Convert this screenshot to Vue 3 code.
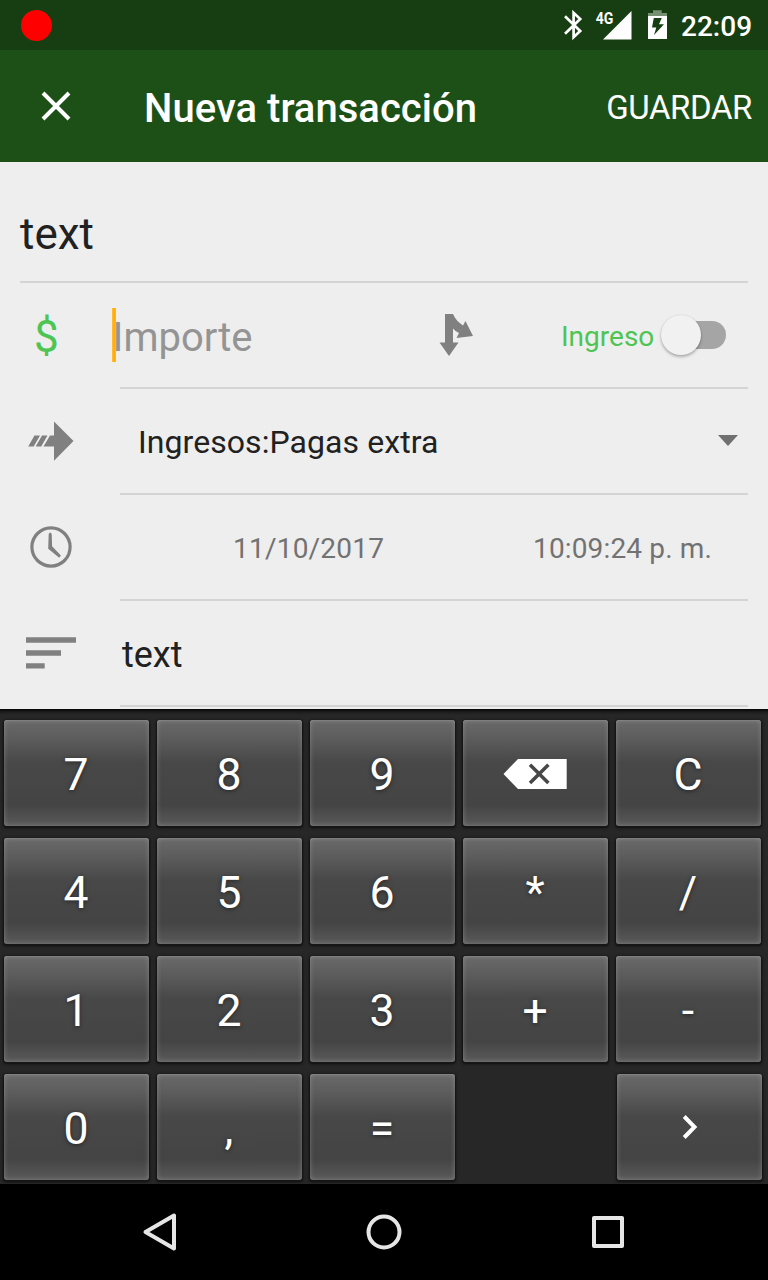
<script setup>
const rows = [
  ['7', '8', '9', 'del', 'C'],
  ['4', '5', '6', '*', '/'],
  ['1', '2', '3', '+', '-'],
  ['0', ',', '=', '', 'next'],
]
</script>

<template>
  <div class="screen">
    <header class="status">
      <i class="record"></i>
      <svg class="status-icons" width="113" height="50" viewBox="560 0 113 50">
        <path d="M565 16.2 L580.2 31 L573.6 37.2 V12.8 L580.2 19 L565 33.8" fill="none" stroke="#fff" stroke-width="2.7" />
        <path d="M603 39.5 L631.5 11 V39.5Z" fill="#fff" />
        <text x="595.7" y="23.5" textLength="17.6" lengthAdjust="spacingAndGlyphs" class="net">4G</text>
        <path d="M648 16 V13 H653 V10.3 H661.7 V13 H667 V16Z" fill="#778f73" />
        <path d="M648 16 H667 V39 H648Z" fill="#fff" />
        <path d="M653.8 18 H661.8 L659 24.3 H664 L654 35 L656.3 27.6 H652Z" fill="#173e12" />
      </svg>
      <span class="clock">22:09</span>
    </header>

    <div class="appbar">
      <svg width="144" height="112" viewBox="0 50 144 112">
        <path d="M43 93 L69 119 M69 93 L43 119" stroke="#fff" stroke-width="4" />
      </svg>
      <h1>Nueva transacción</h1>
      <button class="save">GUARDAR</button>
    </div>

    <main>
      <div class="title-row">text</div>

      <div class="row">
        <div class="lead dollar">$</div>
        <div class="body">
          <div class="amount"><i class="caret"></i><span>Importe</span></div>
          <svg width="60" height="104" viewBox="420 283 60 104">
            <path d="M445 314 H453 C455 319 459 323 463 325.5 L465.5 321 L473 336 L456.500 338 L459 333 C456.500 332 454.500 330 453 328.500 V342.500 H458.500 L449 356 L439.500 342.500 H445Z" fill="#808080" />
          </svg>
          <span class="income">Ingreso</span>
          <div class="switch"><i class="thumb"></i></div>
        </div>
      </div>

      <div class="row">
        <svg class="lead" width="120" height="104" viewBox="0 389 120 104">
          <path d="M54 421.500 L73.500 441 L54 460.800 V446.500 H43.500 L50 435.500 H54Z" fill="#808080" />
          <path d="M34.500 435.500 H40 L33.700 446.500 H28.200Z M42 435.500 H47.500 L41.200 446.500 H35.700Z" fill="#808080" />
        </svg>
        <div class="body">
          <span class="account">Ingresos:Pagas extra</span>
          <i class="arrow"></i>
        </div>
      </div>

      <div class="row">
        <svg class="lead" width="120" height="104" viewBox="0 495 120 104">
          <circle cx="51" cy="547" r="19.100" fill="none" stroke="#808080" stroke-width="3.200" />
          <path d="M48.700 534 Q50.300 531 51.700 534 L52.100 546.200 L60.900 555.400 L59.200 557.700 L48.200 548.800Z" fill="#808080" />
        </svg>
        <div class="body">
          <span class="date">11/10/2017</span>
          <span class="time">10:09:24 p. m.</span>
        </div>
      </div>

      <div class="row">
        <svg class="lead" width="120" height="104" viewBox="0 601 120 104">
          <path d="M26 637.300 H76 V642.700 H26Z M26 650.300 H61 V655.700 H26Z M26 663.300 H44.700 V668.500 H26Z" fill="#808080" />
        </svg>
        <div class="body"><span class="note">text</span></div>
      </div>
    </main>

    <section class="keypad">
      <template v-for="(row, r) in rows" :key="r">
        <div v-for="(k, c) in row" :key="r + '-' + c" :class="{ key: k, next: k === 'next' }">
          <svg v-if="k === 'del'" class="del" width="64" height="30" viewBox="0 0 64 30">
            <path d="M0.500 15 L15 0 H63.700 V30 H15Z" fill="#fff" />
            <path d="M27 5.700 L45.400 24.100 M45.400 5.700 L27 24.100" stroke="#474747" stroke-width="3.500" />
          </svg>
          <svg v-else-if="k === 'next'" width="16" height="24" viewBox="0 0 16 24">
            <path d="M2.200 1.500 L12.500 12 L2.200 22.500" fill="none" stroke="#fff" stroke-width="4" />
          </svg>
          <span v-else-if="k">{{ k }}</span>
        </div>
      </template>
    </section>

    <nav class="nav">
      <svg width="768" height="96" viewBox="0 1184 768 96" fill="none" stroke="#e6e6e6" stroke-width="4" stroke-linejoin="round">
        <path d="M174 1215.500 V1248.500 L145.500 1232Z" />
        <circle cx="384" cy="1232" r="15.500" />
        <rect x="594" y="1218" width="28" height="28" />
      </svg>
    </nav>
  </div>
</template>

<style>
body { margin: 0; background: #000; }
</style>

<style scoped>
.screen { width: 768px; height: 1280px; overflow: hidden; background: #eee; font-family: Roboto, "Noto Sans", sans-serif; color: #212121; display: flex; flex-direction: column; }
svg { display: block; flex: none; }
i { display: block; flex: none; }
.status { height: 50px; background: #173e12; display: flex; align-items: center; flex: none; }
.record { width: 31px; height: 31px; margin-left: 20.500px; border-radius: 50%; background: #f00; }
.status-icons { margin-left: 508.500px; }
.net { font: 700 16px Roboto, sans-serif; fill: #fff; }
.clock { margin-left: 8px; font-size: 28px; font-weight: 500; line-height: 28px; padding-top: 3px; color: #fff; white-space: nowrap; }
.appbar { height: 112px; flex: none; background: #1d5017; display: flex; align-items: center; color: #fff; }
h1 { margin: 0; flex: 1; font-size: 40px; font-weight: 500; line-height: 48px; letter-spacing: 0.03px; padding-top: 6px; white-space: nowrap; }
.save { all: unset; font-size: 33px; letter-spacing: -0.4px; line-height: 40px; padding: 3px 16px 0 0; }
main { height: 547px; flex: none; }
.title-row { box-sizing: border-box; height: 121px; margin: 0 20px; border-bottom: 2px solid #d4d4d4; font-size: 44px; line-height: 52px; padding-top: 46px; }
.row { display: flex; height: 106px; }
.lead { width: 120px; flex: none; }
.dollar { box-sizing: border-box; padding: 28px 0 0 34px; font-size: 44px; line-height: 52px; color: #4cc552; }
.body { box-sizing: border-box; width: 628px; height: 106px; border-bottom: 2px solid #d4d4d4; display: flex; align-items: center; white-space: nowrap; }
.amount { width: 308px; margin-left: -8px; display: flex; align-items: center; font-size: 40px; line-height: 54px; color: #949494; }
.amount span { margin: 0 0 -4px -3.500px; padding-top: 2px; }
.caret { width: 4px; height: 54px; background: linear-gradient(90deg, #ffbd45, #ffab00 60%, #ffb938); }
.income { margin-left: 81px; width: 100px; font-size: 28px; line-height: 32px; padding-top: 3px; color: #4cc552; }
.switch { position: relative; width: 60px; height: 28px; margin-left: 5px; border-radius: 14px; background: #a5a5a5; }
.thumb { position: absolute; left: -5px; top: -6px; width: 40px; height: 40px; border-radius: 50%; background: #f1f1f1; box-shadow: 0 2px 3px rgba(0,0,0,.26), 0 0 2px rgba(0,0,0,.12); }
.account { margin-left: 18px; width: 580px; font-size: 32px; letter-spacing: 0.07px; line-height: 38px; padding-top: 2px; }
.arrow { border: 10px solid transparent; border-top: 11px solid #707070; border-bottom: 0; margin-top: -2px; }
.date, .time { font-size: 28px; letter-spacing: 0.22px; line-height: 32px; padding-top: 3px; color: #727272; }
.time { letter-spacing: 0.15px; }
.date { margin-left: 113px; width: 300px; }
.note { margin-left: 2px; font-size: 36px; line-height: 42px; padding-top: 4px; }
.keypad { box-sizing: border-box; flex: none; height: 475px; background: linear-gradient(#050505, #1d1d1d 3px, #272727 6px); padding: 11px 4px 4px; display: grid; grid-template-columns: repeat(5, 145px); grid-auto-rows: 106px; gap: 12px 8px; }
.key { display: flex; align-items: center; justify-content: center; border-radius: 3px; color: #fff; font-size: 44.500px; line-height: 52px; text-shadow: 0 1px 4px rgba(0,0,0,.5); background: linear-gradient(#6a6a6a, #5c5c5c 18%, #484848 40%, #444 80%, #5a5a5a); box-shadow: inset 0 0 5px rgba(180,180,180,.42), inset 0 1px 1px #777, 0 1px 1px 1px #161616, 0 1px 3px 1px #161616; }
.key span { padding: 4px 1px 0 0; }
.del { margin: 2px 1px 0 0; }
.next { transform: translateX(1px); }
.nav { height: 96px; flex: none; background: #000; }
</style>
